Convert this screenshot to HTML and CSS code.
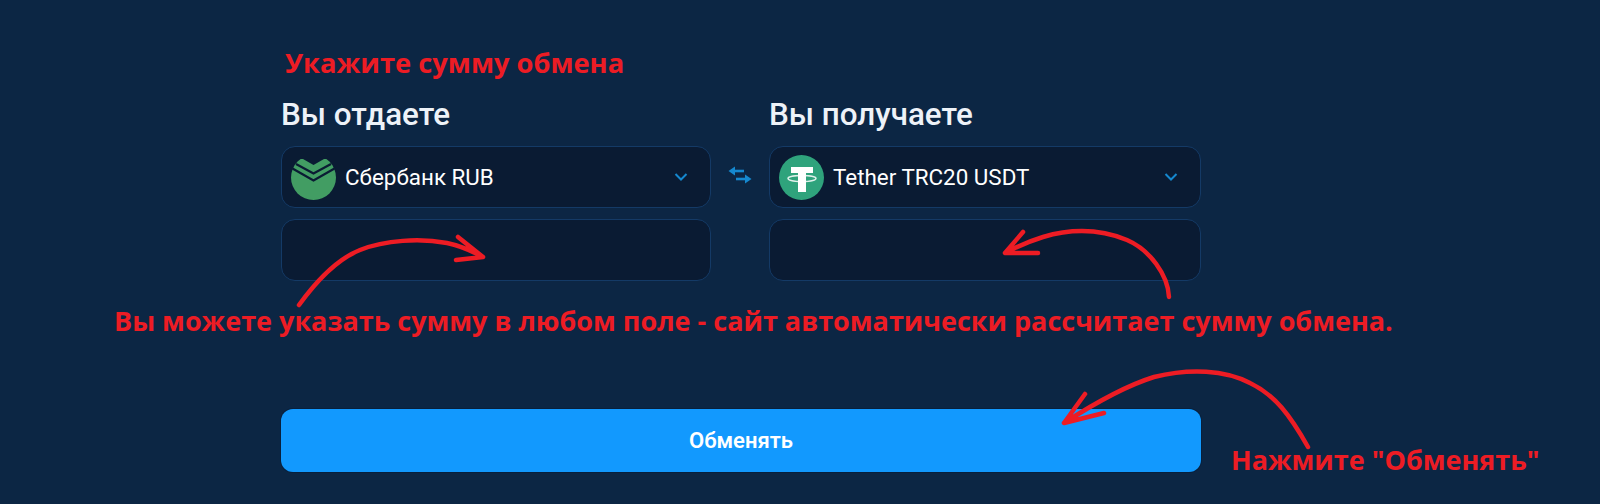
FILE: index.html
```html
<!DOCTYPE html>
<html lang="en">
<head>
  <meta charset="UTF-8">
  <title>Обмен</title>
  <link rel="stylesheet" href="styles.css">
</head>
<body>
  <div class="page">
    <div class="exchange">
      <div class="columns">
        <div class="side side-give">
          <h2>Вы отдаете</h2>
          <div class="field select">
            <svg class="coin" viewBox="0 0 45 45">
              <circle cx="22.500" cy="22.500" r="22.500" fill="#429d63"/>
              <path d="M0 0 H45 V4 H33 L22.500 10 L12 4 H0 Z" fill="#0a1b33"/>
              <path d="M5 9 L22.500 18.500 L40 9 M1.500 13.500 L22.500 25.500 L43.500 13.500" fill="none" stroke="#0a1b33" stroke-width="2.200"/>
            </svg>
            <span class="name">Сбербанк RUB</span>
            <svg class="chevron" viewBox="0 0 14 10"><path d="M1.5 2 L7 7.5 L12.5 2" fill="none" stroke="#1588cf" stroke-width="2"/></svg>
          </div>
          <div class="field"></div>
        </div>
        <div class="swap">
          <svg viewBox="0 0 24 18" width="24" height="18">
            <path d="M3 5 H16" fill="none" stroke="#1588cf" stroke-width="2.600"/>
            <path d="M0.500 5 L7 0.500 V9.500 Z" fill="#1588cf"/>
            <path d="M8 13 H21" fill="none" stroke="#1588cf" stroke-width="2.600"/>
            <path d="M23.500 13 L17 8.500 V17.500 Z" fill="#1588cf"/>
          </svg>
        </div>
        <div class="side">
          <h2>Вы получаете</h2>
          <div class="field select">
            <svg class="coin" viewBox="0 0 45 45">
              <circle cx="22.500" cy="22.500" r="22.500" fill="#2fa37c"/>
              <path d="M12 12 H34 V18 H27 V37 H19 V18 H12 Z" fill="#fff"/>
              <ellipse cx="23" cy="23.500" rx="14" ry="3" fill="none" stroke="#fff" stroke-width="1.400" opacity="0.85"/>
            </svg>
            <span class="name">Tether TRC20 USDT</span>
            <svg class="chevron" viewBox="0 0 14 10"><path d="M1.5 2 L7 7.5 L12.5 2" fill="none" stroke="#1588cf" stroke-width="2"/></svg>
          </div>
          <div class="field"></div>
        </div>
      </div>
      <button class="submit">Обменять</button>
    </div>

    <!-- red notes drawn on top of the screenshot -->
    <div class="note note-top">Укажите сумму обмена</div>
    <div class="note note-mid">Вы можете указать сумму в любом поле - сайт автоматически рассчитает сумму обмена.</div>
    <div class="note note-btn">Нажмите "Обменять"</div>
    <svg class="arrows" viewBox="0 0 1600 504" width="1600" height="504">
      <path d="M299 305 C320 276 340 258 360 250 C385 240 420 238 447 243 C462 246 472 251 483 257 M458 237 L483 257 L456 260"/>
      <path d="M1169 297 C1168 275 1150 250 1127 240 C1100 229 1070 229 1043 237 C1030 241 1018 246 1005 253 M1023 232 L1005 253 L1038 253"/>
      <path d="M1308 447 C1290 415 1275 395 1250 383 C1225 370 1190 368 1154 377 C1125 386 1095 403 1064 423 M1085 394 L1064 423 L1104 413"/>
    </svg>
  </div>
</body>
</html>
```

FILE: styles.css
```css
body { margin: 0; background-color: #0c2644; font-family: Roboto, sans-serif; }

.page { position: relative; width: 1600px; height: 504px; overflow: hidden; }

.exchange { width: 920px; margin-left: 281px; padding-top: 97px; }
.columns { display: flex; }
.side { flex: 1; }
.side-give { flex: none; width: 430px; }
.side h2 { margin: 0 0 14px; font-size: 31.4px; line-height: 35px; font-weight: 500; color: #eef2f8; }

.swap { width: 58px; margin-top: 69px; display: flex; justify-content: center; }

.field {
  height: 62px;
  box-sizing: border-box;
  margin-bottom: 11px;
  background-color: #0a1b33;
  border: 1px solid #143a66;
  border-radius: 14px;
}
.select { display: flex; align-items: center; padding: 0 21px 0 9px; }
.coin { width: 45px; height: 45px; flex: none; }
.name { margin-left: 9px; flex: 1; font-size: 22.4px; color: #fff; }
.chevron { width: 14px; height: 10px; margin-right: 1px; }

.submit {
  display: block;
  width: 100%;
  height: 63px;
  margin-top: 117px;
  background-color: #1299fe;
  border: 0;
  border-radius: 12px;
  box-shadow: 0 0 0 1px #08203d;
  color: #fff;
  font-family: Roboto, sans-serif;
  font-size: 22px;
  font-weight: 600;
}

.note {
  position: absolute;
  color: #ed1c24;
  font-family: "Open Sans", sans-serif;
  font-weight: 700;
  white-space: nowrap;
}
.note-top { left: 285px; top: 44px; font-size: 27.3px; }
.note-mid { left: 114px; top: 302px; font-size: 27px; }
.note-btn { left: 1231px; top: 441px; font-size: 27px; }

.arrows { position: absolute; left: 0; top: 0; pointer-events: none; }
.arrows path { fill: none; stroke: #ed1c24; stroke-width: 4.5; stroke-linecap: round; stroke-linejoin: round; }
```
